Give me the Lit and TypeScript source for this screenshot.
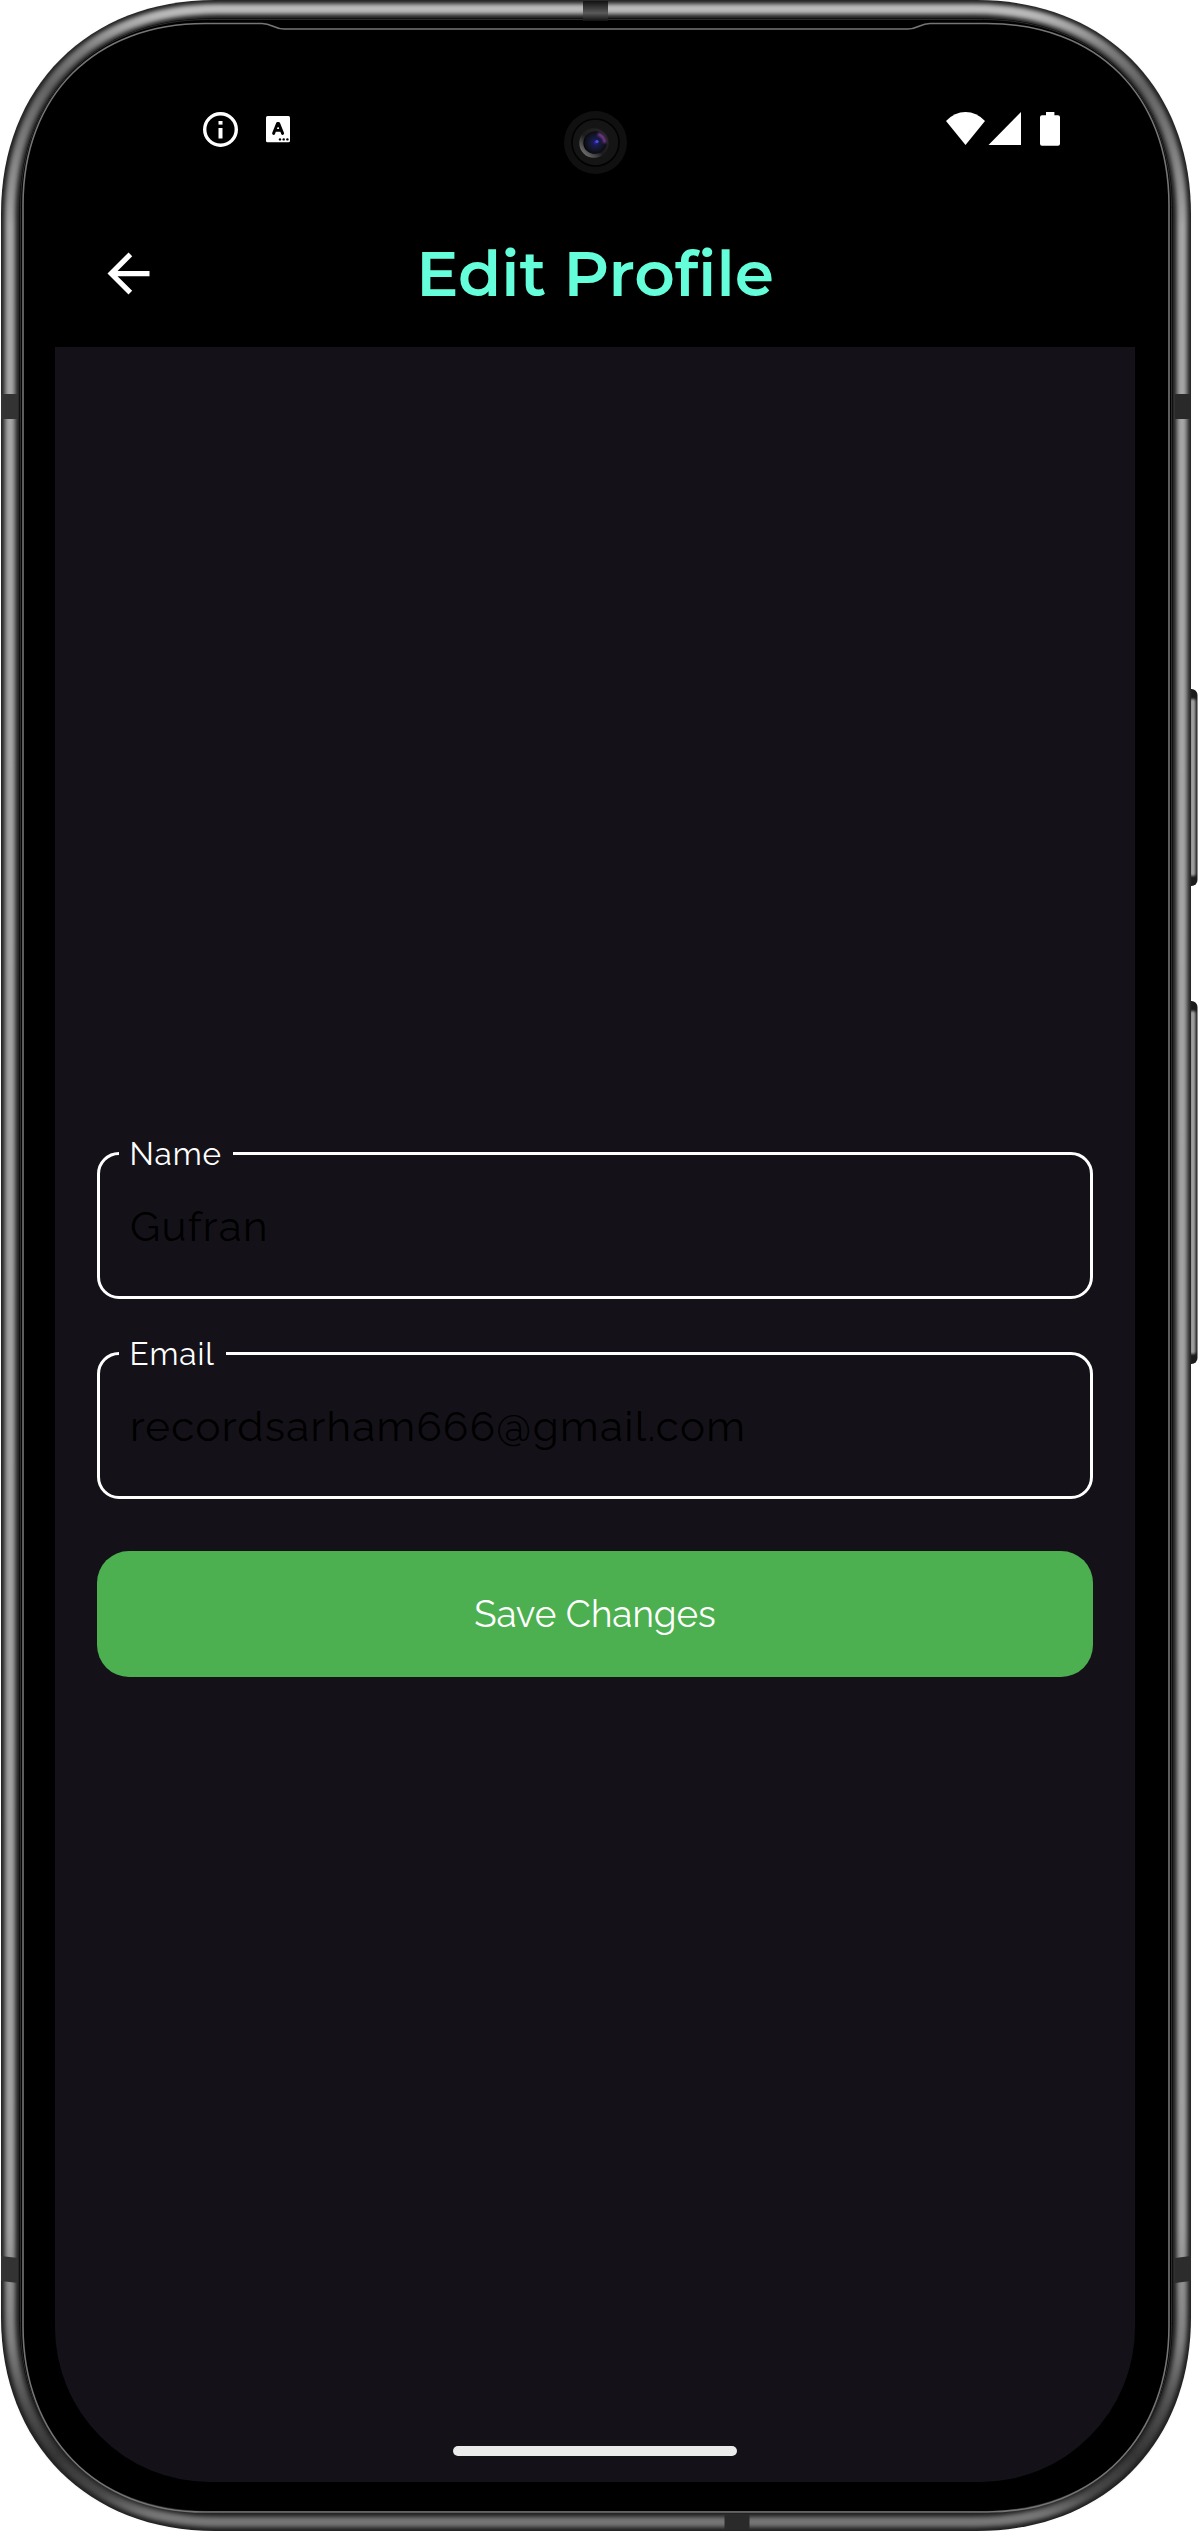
import { LitElement, html, css, svg } from "lit";
import { customElement, property } from "lit/decorators.js";

@customElement("outlined-field")
class OutlinedField extends LitElement {
  @property() label = "";
  @property() value = "";
  static styles = css`
    :host { display: block; }
    .box {
      margin: 0; min-width: 0; box-sizing: border-box; height: 157px;
      border: 3px solid #fff; border-radius: 22px; padding: 0 0 0 30px;
    }
    .legend {
      padding: 0 11px 0 10.4px; margin-left: -11px; height: 23px; line-height: 24.6px;
      font-size: 31.5px; letter-spacing: 0.98px; color: #fff; white-space: nowrap;
    }
    .value { font-size: 42px; line-height: 48px; letter-spacing: 1.31px; color: #000; padding-top: 38px; }
  `;
  render() {
    return html`<fieldset class="box">
      <legend class="legend">${this.label}</legend>
      <div class="value">${this.value}</div>
    </fieldset>`;
  }
}

@customElement("phone-frame")
class PhoneFrame extends LitElement {
  static styles = css`
    :host { display: block; }
    .frame { display: block; width: 1198px; height: 2531px; }
  `;
  private shell(i: number, r: number, k: number) {
    const l = 1 + i, t = i, R = 1191 - i, b = 2531 - i;
    return `M${l} ${t + r}C${l} ${t + k} ${l + k} ${t} ${l + r} ${t}H${R - r}C${R - k} ${t} ${R} ${t + k} ${R} ${t + r}V${b - r}C${R} ${b - k} ${R - k} ${b} ${R - r} ${b}H${l + r}C${l + k} ${b} ${l} ${b - k} ${l} ${b - r}Z`;
  }
  private key(y: number, h: number) {
    return svg`<g>
      <rect x="1180" y=${y} width="17.5" height=${h} rx="6" fill="#1c1c1c"/>
      <rect x="1190" y=${y + 10} width="5.5" height=${h - 20} rx="2" fill="#a0a0a0" filter="url(#soft1)"/>
    </g>`;
  }
  render() {
    return html`<svg class="frame" viewBox="0 0 1198 2531">
      <defs>
        <linearGradient id="metal" gradientUnits="userSpaceOnUse" x1="0" y1="0" x2="0" y2="2531">
          <stop offset="0" stop-color="#c0c0c0"/><stop offset=".006" stop-color="#b8b8b8"/>
          <stop offset=".02" stop-color="#7c7c7c"/><stop offset=".034" stop-color="#646464"/>
          <stop offset=".06" stop-color="#808080"/><stop offset=".09" stop-color="#a6a6a6"/>
          <stop offset=".88" stop-color="#a0a0a0"/><stop offset=".925" stop-color="#808080"/>
          <stop offset=".95" stop-color="#505050"/><stop offset=".97" stop-color="#363636"/>
          <stop offset=".985" stop-color="#484848"/><stop offset=".994" stop-color="#787878"/>
          <stop offset="1" stop-color="#747474"/>
        </linearGradient>
        <linearGradient id="band" x1="0" y1="0" x2="0" y2="1">
          <stop offset="0" stop-color="#111"/><stop offset=".6" stop-color="#5a5a5a"/><stop offset="1" stop-color="#111"/>
        </linearGradient>
        <radialGradient id="glass" cx=".5" cy=".5" r=".5">
          <stop offset="0" stop-color="#2c2a96"/><stop offset=".22" stop-color="#1b1a5a"/>
          <stop offset=".6" stop-color="#14182c"/><stop offset="1" stop-color="#0b0b14"/>
        </radialGradient>
        <linearGradient id="rim" x1="0" y1="1" x2="1" y2="0">
          <stop offset="0" stop-color="#808080"/><stop offset=".45" stop-color="#1c1c1c"/><stop offset="1" stop-color="#262626"/>
        </linearGradient>
        <filter id="soft1" filterUnits="userSpaceOnUse" x="0" y="0" width="1198" height="2531"><feGaussianBlur stdDeviation="1.2"/></filter>
        <filter id="soft2" filterUnits="userSpaceOnUse" x="0" y="0" width="1198" height="2531"><feGaussianBlur stdDeviation="2.2"/></filter>
      </defs>
      ${this.key(689, 197)}${this.key(1001, 363)}
      <path d=${this.shell(0, 214, 87)} fill="#1e1e1e"/>
      <path d=${this.shell(9, 208, 81)} fill="none" stroke="url(#metal)" stroke-width="10.5" filter="url(#soft2)"/>
      <path d=${this.shell(18.5, 190, 76)} fill="#000"/>
      <path d=${this.shell(19.5, 188, 75)} fill="none" stroke="#2c2c2c" stroke-width="1"/>
      <g fill="#333">
        <rect x="1" y="394" width="17" height="25"/><rect x="1175" y="394" width="16" height="25" fill="#292929"/>
        <path d="M1 2256l17 2v25l-17-2z"/><path d="M1191 2256l-16 2v25l16-2z" fill="#2c2c2c"/>
        <rect x="583" y="1" width="25" height="20" fill="url(#band)"/>
        <rect x="724.5" y="2514" width="25" height="16" fill="#2a2a2a"/>
      </g>
      <path fill="none" stroke="#757575" stroke-width="1.6" d="M23 205C23 95 95 23.5 205 23.5H262C272 23.5 274 29 284 29H908C918 29 920 23.5 930 23.5H987C1097 23.5 1169 95 1169 205V2326C1169 2436 1097 2512 987 2512H205C95 2512 23 2436 23 2326Z"/>
      <circle cx="595.5" cy="142.5" r="31.5" fill="#101010"/>
      <circle cx="595.5" cy="142.5" r="23.5" fill="#151515" stroke="#020202" stroke-width="1.6"/>
      <circle cx="594" cy="143" r="12.7" fill="#050505" stroke="url(#rim)" stroke-width="4"/>
      <circle cx="595.5" cy="142.5" r="11.2" fill="url(#glass)"/>
      <path d="M598 134a10 10 0 0 1 7 9" fill="none" stroke="#7a3d91" stroke-width="3" filter="url(#soft1)"/>
      <circle cx="597" cy="141.5" r="1.6" fill="#4f4af0"/>
    </svg>`;
  }
}

@customElement("app-root")
class AppRoot extends LitElement {
  static styles = css`
    :host { display: block; font-family: Raleway, Lato, "Open Sans", sans-serif; }
    .stage { display: grid; width: 1198px; height: 2531px; background: #fff; overflow: hidden; }
    .stage > * { grid-area: 1 / 1; }
    .screen { display: flex; flex-direction: column; margin: 31px 63px 49px 55px; z-index: 1; }
    .status {
      display: flex; align-items: center; justify-content: space-between;
      height: 169px; box-sizing: border-box; padding: 27px 73px 0 146px;
    }
    .side { display: flex; align-items: center; }
    .bar { display: grid; grid-template-columns: 147px 1fr 147px; align-items: center; height: 147px; }
    .back { display: block; margin-left: 42px; }
    .title {
      margin: 0; text-align: center; color: #64ffda; white-space: nowrap;
      font: 600 63px/76px Montserrat, Inter, sans-serif;
    }
    .content {
      flex: 1; background: #141218; border-radius: 0 0 155px 155px; box-sizing: border-box;
      display: flex; flex-direction: column; padding: 795px 42px 0;
    }
    .form { display: flex; flex-direction: column; gap: 42.5px; }
    .save {
      height: 126px; border: 0; border-radius: 32px; background: #4caf50; color: #fff; margin-top: 9.5px;
      font: inherit; font-size: 36.75px; padding: 0;
    }
    .spacer { flex: 1; }
    .pill { align-self: center; width: 284px; height: 10px; border-radius: 5px; background: #ebebeb; margin-bottom: 26px; }
    svg { display: block; }
  `;
  render() {
    return html`<div class="stage">
      <phone-frame></phone-frame>
      <main class="screen">
        <div class="status">
          <div class="side">
            <svg width="120" height="40" viewBox="201 109 120 40">
              <circle cx="220.5" cy="129.5" r="15.8" fill="none" stroke="#fff" stroke-width="3.4"/>
              <rect x="218.5" y="121" width="4" height="3.6" fill="#fff"/><rect x="218.5" y="128" width="4" height="10.5" fill="#fff"/>
              <rect x="266" y="116" width="24" height="26.3" rx="1.6" fill="#fff"/>
              <path d="M273.6 133.4L277.6 123.4H278.6L282.6 133.4M275.5 130.4H280.7" fill="none" stroke="#000" stroke-width="2.9" stroke-linejoin="round" stroke-linecap="round"/>
              <g fill="#000"><circle cx="280" cy="139.4" r="1.2"/><circle cx="283.7" cy="139.4" r="1.2"/><circle cx="287.4" cy="139.4" r="1.2"/></g>
            </svg>
          </div>
          <svg width="116" height="40" viewBox="946 109 116 40">
            <path fill="#fff" d="M946 121Q954.5 112 965.5 112T985 121L965.5 145Z"/>
            <path fill="#fff" d="M988.5 145L1021 112V145Z"/>
            <path fill="#fff" d="M1046 112h8.4v3.3h3.6a2 2 0 0 1 2 2v26.5a2 2 0 0 1-2 2h-16a2 2 0 0 1-2-2v-26.5a2 2 0 0 1 2-2h4z"/>
          </svg>
        </div>
        <header class="bar">
          <svg class="back" width="63" height="63" viewBox="0 0 24 24"><path fill="#fff" d="M20 11H7.83l5.59-5.59L12 4l-8 8 8 8 1.41-1.41L7.83 13H20v-2z"/></svg>
          <h1 class="title">Edit Profile</h1>
        </header>
        <section class="content">
          <div class="form">
            <outlined-field label="Name" value="Gufran"></outlined-field>
            <outlined-field label="Email" value="recordsarham666@gmail.com"></outlined-field>
            <button class="save">Save Changes</button>
          </div>
          <div class="spacer"></div>
          <div class="pill"></div>
        </section>
      </main>
    </div>`;
  }
}
